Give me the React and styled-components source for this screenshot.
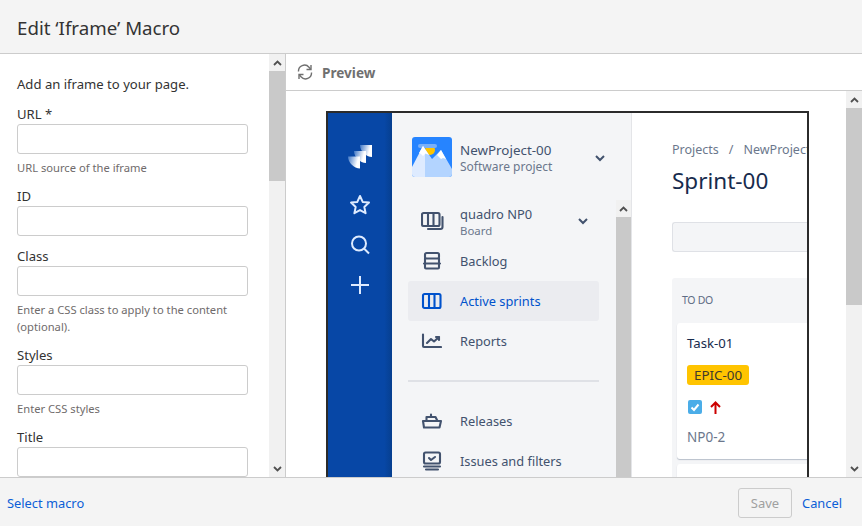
import React from "react";
import styled, { createGlobalStyle } from "styled-components";

const Global = createGlobalStyle`
  html, body { margin: 0; padding: 0; background: #fff; }
  body { font-family: "Noto Sans", "Open Sans", sans-serif; color: #333; }
  * { box-sizing: border-box; }
`;

const Dialog = styled.div`
  width: 862px; height: 526px; display: flex; flex-direction: column; overflow: hidden; background: #fff;
`;
const Header = styled.header`
  height: 54px; flex: none; background: #f4f4f4; border-bottom: 1px solid #ccc;
  display: flex; align-items: center; padding: 0 0 0 17px;
`;
const Heading = styled.h1`
  margin: 0; font-size: 18.7px; font-weight: 400; color: #333; line-height: 1; position: relative; top: 2px;
`;
const Body = styled.div`
  flex: 1; min-height: 0; display: flex;
`;
const Footer = styled.footer`
  height: 49px; flex: none; background: #f4f4f4; border-top: 1px solid #ccc;
  display: flex; align-items: center; justify-content: space-between; padding: 2px 20px 0 7px;
`;
const FooterLink = styled.a`
  font-size: 12.85px; color: #0b5ed7; text-decoration: none;
`;
const FooterActions = styled.div`
  display: flex; align-items: center; gap: 10px;
`;
const SaveButton = styled.button`
  width: 54px; height: 30px; font: inherit; font-size: 13px; color: #a0a0a0; background: #f4f4f4;
  border: 1px solid #ccc; border-radius: 3px; padding: 0;
`;

const Left = styled.aside`
  width: 286px; flex: none; display: flex; border-right: 1px solid #ccc; min-height: 0;
`;
const Form = styled.div`
  flex: 1; min-width: 0; overflow: hidden; padding: 20px 21px 0 17px;
`;
const Intro = styled.p`
  margin: 0 0 10px; font-size: 13.1px; line-height: 20px; color: #333;
`;
const Field = styled.div`
  margin-bottom: 10px;
`;
const Label = styled.label`
  display: block; font-size: 13.1px; line-height: 21px; height: 20px; color: #333;
`;
const TextInput = styled.div`
  height: 30px; background: #fff; border: 1px solid #ccc; border-radius: 3px;
`;
const Help = styled.div`
  font-size: 11.2px; line-height: 17px; color: #6f6b6b; margin-top: 5px;
`;

const Bar = styled.div`
  width: ${p => p.$w}px; flex: none; background: #f1f1f1; display: flex; flex-direction: column;
`;
const Arrow = styled.div`
  height: 17px; flex: none; display: flex; align-items: center; justify-content: center;
`;
const Thumb = styled.div`
  height: ${p => p.$h}px; flex: none; background: #c9c9c9;
`;
const Track = styled.div`flex: 1;`;

const ArrowIcon = ({ down }) => (
  <svg width="9" height="6" viewBox="0 0 9 6">
    <path d={down ? "M1 1l3.5 3.5L8 1" : "M1 5l3.5-3.5L8 5"} fill="none" stroke="#505050" strokeWidth="1.8" />
  </svg>
);
const Scrollbar = ({ thumb, w = 16 }) => (
  <Bar $w={w}>
    <Arrow><ArrowIcon /></Arrow>
    <Thumb $h={thumb} />
    <Track />
    <Arrow><ArrowIcon down /></Arrow>
  </Bar>
);

const Right = styled.section`
  flex: 1; min-width: 0; display: flex; flex-direction: column;
`;
const PreviewBar = styled.div`
  height: 37px; flex: none; border-bottom: 1px solid #ccc; display: flex; align-items: center; gap: 9px; padding-left: 11px;
`;
const PreviewLabel = styled.span`
  font-size: 13.6px; font-weight: 700; color: #707070;
`;
const PreviewBody = styled.div`
  flex: 1; min-height: 0; display: flex;
`;
const Canvas = styled.div`
  flex: 1; min-width: 0; overflow: hidden; padding: 20px 0 0 40px;
`;
const Frame = styled.div`
  width: 483px; height: 400px; border: 2px solid #2b2b2b; border-bottom: 0; display: flex; background: #fff; overflow: hidden;
`;
const GlobalNav = styled.div`
  width: 64px; flex: none; background: linear-gradient(90deg, #0747a6 0 88%, #063f8f 100%);
  display: flex; flex-direction: column; align-items: center; padding-top: 32px; gap: 18px;
`;
const LogoMark = styled.svg`
  margin-bottom: 7px; flex: none;
`;
const Sidebar = styled.div`
  width: 240px; flex: none; background: #f4f5f7; border-right: 1px solid #e4e5e8; display: flex; flex-direction: column;
`;
const ProjectHead = styled.div`
  height: 87px; flex: none; display: flex; align-items: flex-start; padding: 24px 0 0 20px;
`;
const ProjectText = styled.div`
  margin-left: 8px; width: 135px; display: flex; flex-direction: column; padding-top: 4px;
`;
const ProjectName = styled.span`
  font-size: 13.4px; line-height: 18px; color: #42526e;
`;
const SubText = styled.span`
  font-size: ${p => p.$size || 12}px; line-height: 15px; color: #6b778c;
`;
const Chevron = styled.svg`
  flex: none; margin-top: ${p => p.$top || 0}px;
`;
const SideScroll = styled.div`
  flex: 1; min-height: 0; display: flex;
`;
const NavColumn = styled.div`
  flex: 1; min-width: 0; padding: 1px 16px 0 16px; overflow: hidden;
`;
const NavItem = styled.div`
  height: 40px; width: 191px; display: flex; align-items: center; border-radius: 3px; padding-left: 13px;
  background: ${p => (p.$active ? "#ebecf0" : "transparent")};
`;
const NavIcon = styled.span`
  width: 23px; height: 20px; flex: none; display: flex; align-items: center; justify-content: flex-start; margin-right: 16px;
`;
const NavLabel = styled.span`
  font-size: 12.8px; line-height: 18px; color: ${p => (p.$active ? "#0052cc" : "#42526e")};
`;
const BoardText = styled.div`
  display: flex; flex-direction: column; width: 118px; font-size: 12.9px; line-height: 18px; color: #42526e;
`;
const NavDivider = styled.div`
  width: 191px; height: 2px; background: #dfe1e6; margin: 19px 0 19px;
`;
const Main = styled.div`
  flex: 1; min-width: 0; padding: 26px 0 0 40px; overflow: hidden;
`;
const Crumbs = styled.div`
  font-size: 12.5px; line-height: 22px; color: #6b778c; white-space: nowrap; display: flex; gap: 10px;
`;
const Title = styled.h2`
  margin: 3px 0 0; font-size: 22.5px; line-height: 34px; font-weight: 400; color: #172b4d;
`;
const FilterBox = styled.div`
  height: 30px; width: 160px; margin-top: 24px; background: #f4f5f7; border: 1px solid #dfe1e6; border-right: 0; border-radius: 3px 0 0 3px;
`;
const Column = styled.div`
  width: 160px; height: 300px; margin-top: 26px; background: #f4f5f7; border-radius: 3px 0 0 0; padding-left: 5px;
`;
const ColumnHead = styled.div`
  height: 45px; font-size: 10.5px; line-height: 44px; padding-left: 5px; color: #5e6c84; letter-spacing: -0.3px;
`;
const Card = styled.div`
  background: #fff; border-radius: 3px 0 0 3px; height: 136px; box-shadow: 0 1px 1px rgba(9,30,66,.25);
  padding: 10px 0 0 10px; display: flex; flex-direction: column; align-items: flex-start;
`;
const NextCard = styled(Card)`
  margin-top: 5px;
`;
const CardTitle = styled.div`
  font-size: 13.2px; line-height: 20px; color: #172b4d;
`;
const Epic = styled.span`
  margin-top: 12px; height: 20px; padding: 0 7px; background: #ffc400; border-radius: 3px;
  font-size: 13.4px; line-height: 20px; color: #403a2b;
`;
const Meta = styled.div`
  margin: 14px 0 0 1px; height: 16px; display: flex; align-items: center; gap: 8px;
`;
const IssueKey = styled.div`
  margin-top: 12px; font-size: 13.5px; line-height: 20px; color: #6b778c;
`;

const Ic = ({ children, w = 22, h = 20, c = "#42526e" }) => (
  <svg width={w} height={h} viewBox={`0 0 ${w} ${h}`} fill="none" stroke={c} strokeWidth="2.1" strokeLinejoin="round" strokeLinecap="round">{children}</svg>
);

const Down = ({ top }) => (
  <Chevron $top={top} width="10" height="7" viewBox="0 0 10 7">
    <path d="M1 1l4 4 4-4" fill="none" stroke="#42526e" strokeWidth="2" />
  </Chevron>
);

const field = (label, help) => (
  <Field key={label}>
    <Label>{label}</Label>
    <TextInput />
    {help && <Help>{help}</Help>}
  </Field>
);

export default function App() {
  return (
    <>
      <Global />
      <Dialog>
        <Header><Heading>Edit ‘Iframe’ Macro</Heading></Header>
        <Body>
          <Left>
            <Form>
              <Intro>Add an iframe to your page.</Intro>
              {field("URL *", "URL source of the iframe")}
              {field("ID")}
              {field("Class", <>Enter a CSS class to apply to the content<br />(optional).</>)}
              {field("Styles", "Enter CSS styles")}
              {field("Title")}
            </Form>
            <Scrollbar thumb={110} />
          </Left>
          <Right>
            <PreviewBar>
              <svg width="16" height="16" viewBox="0 0 16 16" fill="none" stroke="#707070" strokeWidth="1.4">
                <path d="M1.5 7.500A6 6 0 0 1 12 3.200L13.500 5" />
                <path d="M14 1v4.500H9.500" />
                <path d="M14.500 8.500A6 6 0 0 1 4 12.800L2.500 11" />
                <path d="M2 15v-4.500h4.500" />
              </svg>
              <PreviewLabel>Preview</PreviewLabel>
            </PreviewBar>
            <PreviewBody>
              <Canvas>
                <Frame>
                  <GlobalNav>
                    <LogoMark width="24" height="24" viewBox="0 0 24 24">
                      <defs>
                        <linearGradient id="jg" x1="0" y1="0" x2="1" y2="0.25">
                          <stop offset="0" stopColor="#3f77c6" />
                          <stop offset="0.85" stopColor="#fff" />
                        </linearGradient>
                      </defs>
                      <path d="M0 0H12V12C6 12 0 6 0 0z" fill="url(#jg)" transform="translate(12 0)" />
                      <path d="M0 0H12V12C6 12 0 6 0 0z" fill="url(#jg)" transform="translate(6 6)" />
                      <path d="M0 0H12V12C6 12 0 6 0 0z" fill="url(#jg)" transform="translate(0 11.500)" />
                    </LogoMark>
                    <svg width="22" height="22" viewBox="0 0 22 22" fill="none" stroke="#deebff" strokeWidth="2" strokeLinejoin="round">
                      <path d="M11 2l2.7 5.900 6.300.7-4.700 4.300 1.300 6.300L11 16.100 5.400 19.200l1.300-6.300L2 8.600l6.300-.7z" />
                    </svg>
                    <svg width="22" height="22" viewBox="0 0 22 22" fill="none" stroke="#deebff" strokeWidth="2">
                      <circle cx="10" cy="9.500" r="7" />
                      <path d="M15 14.500l5 5" />
                    </svg>
                    <svg width="22" height="22" viewBox="0 0 22 22" fill="none" stroke="#deebff" strokeWidth="2">
                      <path d="M11 2v18M2 11h18" />
                    </svg>
                  </GlobalNav>
                  <Sidebar>
                    <ProjectHead>
                      <svg width="40" height="40" viewBox="0 0 40 40">
                        <rect width="40" height="40" rx="3" fill="#2684ff" />
                        <circle cx="18" cy="13" r="5" fill="#ffc400" />
                        <rect x="6" y="7" width="19" height="4" rx="2" fill="#79b0f8" />
                        <path d="M0 30L11 9L13 12V40H3a3 3 0 0 1-3-3z" fill="#deebff" />
                        <path d="M13 12L20 22L29 13L40 32V37a3 3 0 0 1-3 3H13z" fill="#b3d4ff" />
                        <path d="M7 16L11 9L17 18L13.500 16.500L11 19L9 17zM25 18L29 13L34 22L31 21L29 22L27 20z" fill="#fff" />
                      </svg>
                      <ProjectText>
                        <ProjectName>NewProject-00</ProjectName>
                        <SubText>Software project</SubText>
                      </ProjectText>
                      <Down top={18} />
                    </ProjectHead>
                    <SideScroll>
                      <NavColumn>
                        <NavItem>
                          <NavIcon>
                            <Ic w={23} h={20}>
                              <rect x="1" y="2" width="17.500" height="13" rx="1.500" />
                              <path d="M7 2v13M12.500 2v13M21.500 6v10a2 2 0 0 1-2 2H7" />
                            </Ic>
                          </NavIcon>
                          <BoardText>
                            <span>quadro NP0</span>
                            <SubText $size={11.4}>Board</SubText>
                          </BoardText>
                          <Down />
                        </NavItem>
                        <NavItem>
                          <NavIcon>
                            <Ic w={21} h={20}>
                              <rect x="4" y="2" width="14" height="5.500" rx="1.500" />
                              <path d="M4 7.500v9a1 1 0 0 0 1 1h12a1 1 0 0 0 1-1v-9M3 12.500h16" />
                            </Ic>
                          </NavIcon>
                          <NavLabel>Backlog</NavLabel>
                        </NavItem>
                        <NavItem $active>
                          <NavIcon>
                            <Ic w={21} h={18} c="#0052cc">
                              <rect x="2" y="2" width="17.500" height="14" rx="1.500" />
                              <path d="M8 2v14M13.500 2v14" />
                            </Ic>
                          </NavIcon>
                          <NavLabel $active>Active sprints</NavLabel>
                        </NavItem>
                        <NavItem>
                          <NavIcon>
                            <Ic w={21} h={16}>
                              <path d="M2 1.500V13a1 1 0 0 0 1 1H20M6 10l4-4 3 2.500L18 4M15 4h3v3" />
                            </Ic>
                          </NavIcon>
                          <NavLabel>Reports</NavLabel>
                        </NavItem>
                        <NavDivider />
                        <NavItem>
                          <NavIcon>
                            <Ic w={21} h={16}>
                              <path d="M2 8h18l-1.500 6.500H3zM5.500 8V4h9l2 4M10 4V1.500" />
                            </Ic>
                          </NavIcon>
                          <NavLabel>Releases</NavLabel>
                        </NavItem>
                        <NavItem>
                          <NavIcon>
                            <Ic w={21} h={20}>
                              <rect x="3" y="1.500" width="16" height="11" rx="1.500" />
                              <path d="M8 7l2 2 4-3M3 15.500h16M5 18.500h12" />
                            </Ic>
                          </NavIcon>
                          <NavLabel>Issues and filters</NavLabel>
                        </NavItem>
                      </NavColumn>
                      <Scrollbar thumb={300} w={15} />
                    </SideScroll>
                  </Sidebar>
                  <Main>
                    <Crumbs>
                      <span>Projects</span>
                      <span>/</span>
                      <span>NewProject-00</span>
                    </Crumbs>
                    <Title>Sprint-00</Title>
                    <FilterBox />
                    <Column>
                      <ColumnHead>TO DO</ColumnHead>
                      <Card>
                        <CardTitle>Task-01</CardTitle>
                        <Epic>EPIC-00</Epic>
                        <Meta>
                          <svg width="14" height="14" viewBox="0 0 14 14">
                            <rect width="14" height="14" rx="2" fill="#4bade8" />
                            <path d="M3.500 7.500l2.500 2.500 4.500-5.500" fill="none" stroke="#fff" strokeWidth="2" />
                          </svg>
                          <svg width="11" height="13" viewBox="0 0 11 13" fill="none" stroke="#c00" strokeWidth="2">
                            <path d="M5.500 13V2M1 6l4.500-4.500L10 6" />
                          </svg>
                        </Meta>
                        <IssueKey>NP0-2</IssueKey>
                      </Card>
                      <NextCard />
                    </Column>
                  </Main>
                </Frame>
              </Canvas>
              <Scrollbar thumb={197} />
            </PreviewBody>
          </Right>
        </Body>
        <Footer>
          <FooterLink>Select macro</FooterLink>
          <FooterActions>
            <SaveButton disabled>Save</SaveButton>
            <FooterLink>Cancel</FooterLink>
          </FooterActions>
        </Footer>
      </Dialog>
    </>
  );
}
